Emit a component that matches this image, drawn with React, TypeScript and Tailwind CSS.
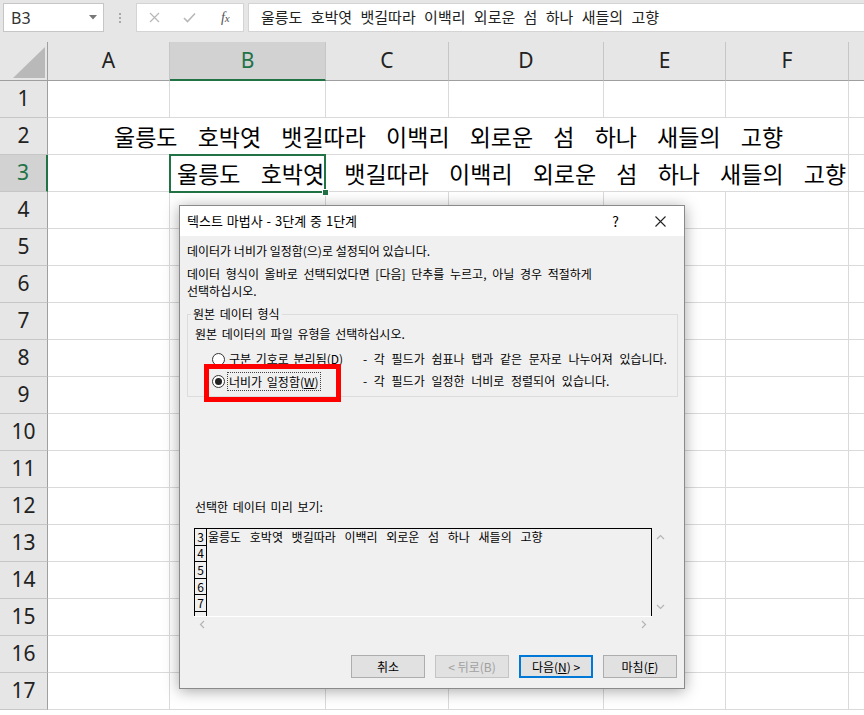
import React from 'react'

const LINE = '울릉도 호박엿 뱃길따라 이백리 외로운 섬 하나 새들의 고향'

function RowHead({ n, active }: { n: number; active?: boolean }) {
  if (active) {
    return (
      <div className="flex items-center justify-center bg-[#d2d2d2] text-[#217346] border-r-2 border-r-[#217346] border-b border-b-[#c6c6c6] text-[21px]">
        {n}
      </div>
    )
  }
  return (
    <div className="flex items-center justify-center bg-[#e6e6e6] text-[#222] border-r border-r-[#9f9f9f] border-b border-b-[#c6c6c6] text-[21px]">
      {n}
    </div>
  )
}

function Cell({ last }: { last?: boolean }) {
  return <div className={last ? 'border-b border-[#dadada]' : 'border-r border-b border-[#dadada]'} />
}

function Chevron({ dir }: { dir: 'up' | 'down' | 'left' | 'right' }) {
  const d = {
    up: 'M1 6 L4.5 2.5 L8 6',
    down: 'M1 3 L4.5 6.5 L8 3',
    left: 'M6 1 L2.5 4.5 L6 8',
    right: 'M3 1 L6.5 4.5 L3 8',
  }[dir]
  return (
    <svg width="9" height="9" viewBox="0 0 9 9" fill="none" stroke="#b5b5b5" strokeWidth="1.2">
      <path d={d} />
    </svg>
  )
}

function Radio({ checked }: { checked?: boolean }) {
  return (
    <div className="w-[13px] h-[13px] rounded-full border border-[#333] bg-white flex items-center justify-center shrink-0">
      {checked && <div className="w-[7px] h-[7px] rounded-full bg-[#222]" />}
    </div>
  )
}

export default function App() {
  const cols = ['A', 'B', 'C', 'D', 'E', 'F']
  const rest = Array.from({ length: 14 }, (_, i) => i + 4)

  return (
    <div className="w-[864px] h-[715px] relative overflow-hidden bg-white font-['Noto_Sans','Noto_Sans_CJK_KR',sans-serif] text-black">
      {/* formula bar */}
      <div className="h-[42px] bg-[#e6e6e6] flex items-start pt-[3px] pl-[3px]">
        <div className="w-[101px] h-[29px] bg-white border border-[#c6c6c6] flex items-center pl-[7px] pr-[6px] text-[16px] text-[#333]">
          <span>B3</span>
          <svg className="ml-auto" width="8" height="5" viewBox="0 0 8 5">
            <path d="M0 0 L8 0 L4 4.5 Z" fill="#777" />
          </svg>
        </div>
        <div className="w-[32px] h-[29px] flex flex-col items-center justify-center gap-[2px]">
          <div className="w-[2px] h-[2px] bg-[#a8a8a8]" />
          <div className="w-[2px] h-[2px] bg-[#a8a8a8]" />
          <div className="w-[2px] h-[2px] bg-[#a8a8a8]" />
        </div>
        <div className="w-[108px] h-[29px] bg-white border border-[#d4d4d4] flex items-center">
          <div className="w-[36px] flex justify-center">
            <svg width="11" height="11" viewBox="0 0 11 11" stroke="#b8b8b8" strokeWidth="1.2">
              <path d="M1 1 L10 10 M10 1 L1 10" />
            </svg>
          </div>
          <div className="w-[36px] flex justify-center">
            <svg width="13" height="11" viewBox="0 0 13 11" fill="none" stroke="#b8b8b8" strokeWidth="1.6">
              <path d="M1 6 L4.5 9.5 L12 1.5" />
            </svg>
          </div>
          <div className="w-[36px] flex justify-center font-['Liberation_Serif',serif] italic text-[14px] text-[#555]">
            f<span className="text-[11px] mt-[3px]">x</span>
          </div>
        </div>
        <div className="ml-[4px] flex-1 h-[29px] bg-white border border-[#d4d4d4] border-r-0 flex items-center pl-[12px] text-[15px] text-[#222] font-['Noto_Sans_CJK_KR',sans-serif] [word-spacing:5px]">
          {LINE}
        </div>
      </div>

      {/* sheet */}
      <div className="grid grid-cols-[48px_122px_156px_123px_155px_122px_123px_15px] grid-rows-[39px_repeat(17,37px)]">
        <div className="bg-[#e6e6e6] border-r border-r-[#9f9f9f] border-b border-b-[#9f9f9f] relative">
          <svg className="absolute left-[13px] top-[5px]" width="32" height="31" viewBox="0 0 32 31">
            <path d="M32 0 L32 31 L0 31 Z" fill="#b9b9b9" />
          </svg>
        </div>
        {cols.map((c) =>
          c === 'B' ? (
            <div key={c} className="bg-[#d2d2d2] border-r border-r-[#c6c6c6] border-b-2 border-b-[#217346] flex items-center justify-center text-[21px] text-[#217346]">
              {c}
            </div>
          ) : (
            <div key={c} className="bg-[#e6e6e6] border-r border-r-[#c6c6c6] border-b border-b-[#9f9f9f] flex items-center justify-center text-[21px] text-[#222]">
              {c}
            </div>
          )
        )}
        <div className="bg-[#e6e6e6] border-b border-b-[#9f9f9f]" />

        {/* row 1 */}
        <RowHead n={1} />
        <Cell />
        <Cell />
        <Cell />
        <Cell />
        <Cell />
        <Cell />
        <Cell last />

        {/* row 2 */}
        <RowHead n={2} />
        <div className="col-span-6 border-r border-b border-[#dadada] flex items-center pl-[66px] text-[23px] whitespace-nowrap font-['Noto_Sans_CJK_KR',sans-serif] [word-spacing:15px]">
          {LINE}
        </div>
        <Cell last />

        {/* row 3 */}
        <RowHead n={3} active />
        <Cell />
        <div className="col-span-5 border-r border-b border-[#dadada] relative flex items-center pl-[7px] text-[23px] whitespace-nowrap font-['Noto_Sans_CJK_KR',sans-serif] [word-spacing:15px]">
          {LINE}
          <div className="absolute left-[-1px] top-[-1px] w-[157px] h-[39px] border-2 border-[#217346]" />
          <div className="absolute left-[152px] top-[34px] w-[7px] h-[7px] bg-[#217346] border border-white" />
        </div>
        <Cell last />

        {rest.map((n) => (
          <React.Fragment key={n}>
            <RowHead n={n} />
            <Cell />
            <Cell />
            <Cell />
            <Cell />
            <Cell />
            <Cell />
            <Cell last />
          </React.Fragment>
        ))}
      </div>

      {/* dialog */}
      <div className="absolute left-[179px] top-[205px] w-[506px] h-[484px] bg-[#f0f0f0] border border-[#8a8a8a] shadow-[0_2px_14px_rgba(0,0,0,0.35)] text-[12px] font-['Noto_Sans_CJK_KR',sans-serif] [word-spacing:2px]">
        <div className="h-[30px] bg-white flex items-center pl-[7px] text-[13px] [word-spacing:1px]">
          <span>텍스트 마법사 - 3단계 중 1단계</span>
          <span className="ml-auto text-[14px]">?</span>
          <svg className="ml-[36px] mr-[18px]" width="11" height="11" viewBox="0 0 11 11" stroke="#222" strokeWidth="1.1">
            <path d="M0.5 0.5 L10.5 10.5 M10.5 0.5 L0.5 10.5" />
          </svg>
        </div>

        <div className="px-[7px]">
          <div className="mt-[7px] leading-[16px] [word-spacing:0px]">데이터가 너비가 일정함(으)로 설정되어 있습니다.</div>
          <div className="mt-[6px] leading-[17px] [word-spacing:3px]">
            데이터 형식이 올바로 선택되었다면 [다음] 단추를 누르고, 아닐 경우 적절하게
            <br />
            선택하십시오.
          </div>

          <fieldset className="mt-[7px] w-[491px] border border-[#dcdcdc] pb-[4px]">
            <legend className="ml-[3px] px-[2px] leading-[16px]">원본 데이터 형식</legend>
            <div className="mt-[4px] ml-[7px] leading-[16px]">원본 데이터의 파일 유형을 선택하십시오.</div>
            <div className="mt-[6px] h-[22px] flex items-center">
              <div className="ml-[24px]">
                <Radio />
              </div>
              <div className="ml-[3px] w-[135px] pl-[1px]">
                구분 기호로 분리됨(<span className="underline">D</span>)
              </div>
              <div className="[word-spacing:4px]">- 각 필드가 쉼표나 탭과 같은 문자로 나누어져 있습니다.</div>
            </div>
            <div className="h-[22px] flex items-center">
              <div className="ml-[24px]">
                <Radio checked />
              </div>
              <div className="ml-[2px] w-[136px]">
                <span className="border border-dotted border-[#444] px-[1px] leading-[17px] inline-block">
                  너비가 일정함(<span className="underline">W</span>)
                </span>
              </div>
              <div className="[word-spacing:4px]">- 각 필드가 일정한 너비로 정렬되어 있습니다.</div>
            </div>
          </fieldset>

          <div className="mt-[102px] ml-[8px] leading-[16px]">선택한 데이터 미리 보기:</div>

          <div className="mt-[13px] ml-[7px] grid grid-cols-[458px_16px] grid-rows-[88px_15px] w-[474px]">
            <div className="border-l border-t border-r border-black overflow-hidden">
              {['3', '4', '5', '6', '7', ''].map((n, i) => (
                <div key={i} className="h-[16.6px] flex items-center">
                  <div className="w-[12px] h-full shrink-0 border-r border-b border-black flex items-center justify-center text-[12px] leading-none">
                    {n}
                  </div>
                  {i === 0 && (
                    <div className="pl-[1px] text-[12px] whitespace-nowrap [word-spacing:6px]">{LINE}</div>
                  )}
                </div>
              ))}
            </div>
            <div className="flex flex-col items-center justify-between py-[5px]">
              <Chevron dir="up" />
              <Chevron dir="down" />
            </div>
            <div className="border-t border-white flex items-center justify-between px-[4px]">
              <Chevron dir="left" />
              <Chevron dir="right" />
            </div>
            <div />
          </div>

          <div className="mt-[24px] flex justify-end gap-[10px] [word-spacing:1px]">
            <button className="w-[74px] h-[23px] bg-[#e1e1e1] border border-[#adadad] text-[12px]">취소</button>
            <button className="w-[74px] h-[23px] bg-[#e1e1e1] border border-[#c4c4c4] text-[12px] text-[#a0a0a0]">
              &lt; 뒤로(B)
            </button>
            <button className="w-[74px] h-[23px] bg-[#e1e1e1] border-2 border-[#0078d7] text-[12px]">
              다음(<span className="underline">N</span>) &gt;
            </button>
            <button className="w-[74px] h-[23px] bg-[#e1e1e1] border border-[#adadad] text-[12px]">
              마침(<span className="underline">F</span>)
            </button>
          </div>
        </div>

        {/* red highlight */}
        <div className="absolute left-[24px] top-[158px] w-[137px] h-[38px] border-[5px] border-[#ff0000]" />
      </div>
    </div>
  )
}
